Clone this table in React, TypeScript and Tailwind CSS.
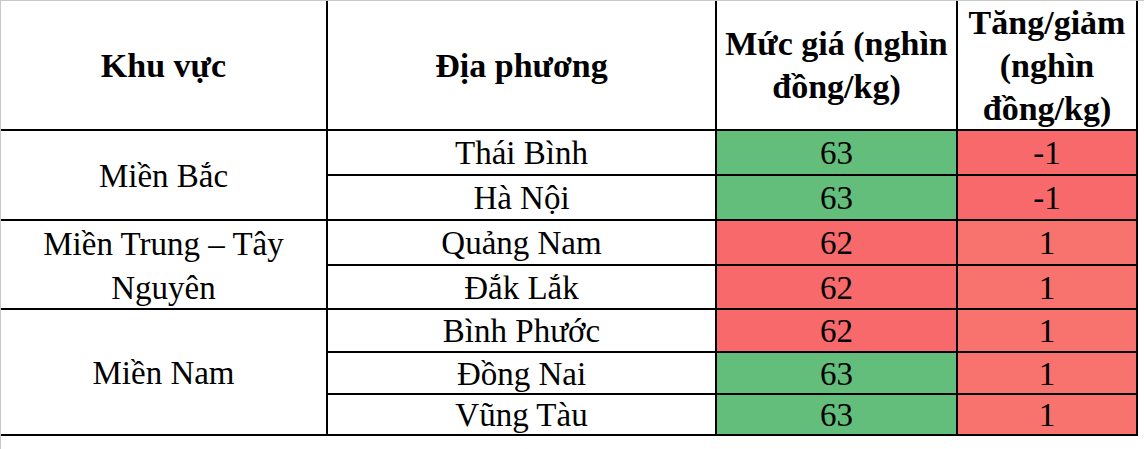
import React from "react";

const serif = { fontFamily: '"Liberation Serif", "Times New Roman", serif' };

type Row = { place: string; price: string; priceUp: boolean; change: string };

const rows: Row[] = [
  { place: "Thái Bình", price: "63", priceUp: true, change: "-1" },
  { place: "Hà Nội", price: "63", priceUp: true, change: "-1" },
  { place: "Quảng Nam", price: "62", priceUp: false, change: "1" },
  { place: "Đắk Lắk", price: "62", priceUp: false, change: "1" },
  { place: "Bình Phước", price: "62", priceUp: false, change: "1" },
  { place: "Đồng Nai", price: "63", priceUp: true, change: "1" },
  { place: "Vũng Tàu", price: "63", priceUp: true, change: "1" },
];

const cell = "border-r-2 border-b-2 border-black flex items-center justify-center min-h-0 overflow-visible";

export default function App() {
  return (
    <div
      className="w-[1144px] h-[449px] bg-white border-t border-l border-[#c8c8c8] text-black"
      style={serif}
    >
      <div className="grid w-[1137px] grid-cols-[327px_389px_241px_180px] grid-rows-[130px_45px_45px_45px_44px_43px_42px_41px]">
        {/* Header */}
        <div className={`${cell} font-bold text-[34px] leading-[43px] text-center`}>Khu vực</div>
        <div className={`${cell} font-bold text-[34px] leading-[43px] text-center`}>Địa phương</div>
        <div className={`${cell} font-bold text-[34px] leading-[43px] text-center`}>
          <span>
            Mức giá (nghìn
            <br />
            đồng/kg)
          </span>
        </div>
        <div className={`${cell} font-bold text-[34px] leading-[43px] text-center`}>
          <span>
            Tăng/giảm
            <br />
            (nghìn
            <br />
            đồng/kg)
          </span>
        </div>

        {/* Region column */}
        <div className={`${cell} col-start-1 row-start-2 row-span-2 pt-[2px] text-[33px] leading-[44px] text-center`}>
          Miền Bắc
        </div>
        <div className={`${cell} col-start-1 row-start-4 row-span-2 pt-[2px] text-[33px] leading-[44px] text-center`}>
          <span>
            Miền Trung – Tây
            <br />
            Nguyên
          </span>
        </div>
        <div className={`${cell} col-start-1 row-start-6 row-span-3 pt-[2px] text-[33px] leading-[44px] text-center`}>
          Miền Nam
        </div>

        {rows.map((r, i) => (
          <React.Fragment key={r.place}>
            <div className={`${cell} col-start-2 pt-[2px] text-[33px] leading-none`} style={{ gridRowStart: i + 2 }}>
              {r.place}
            </div>
            <div
              className={`${cell} col-start-3 pt-[2px] text-[33px] leading-none ${
                r.priceUp ? "bg-[#63be7b]" : "bg-[#f8696b]"
              }`}
              style={{ gridRowStart: i + 2 }}
            >
              {r.price}
            </div>
            <div
              className={`${cell} col-start-4 pt-[2px] text-[33px] leading-none ${
                r.change === "-1" ? "bg-[#f8696b]" : "bg-[#f8736e]"
              }`}
              style={{ gridRowStart: i + 2 }}
            >
              {r.change}
            </div>
          </React.Fragment>
        ))}
      </div>
    </div>
  );
}
